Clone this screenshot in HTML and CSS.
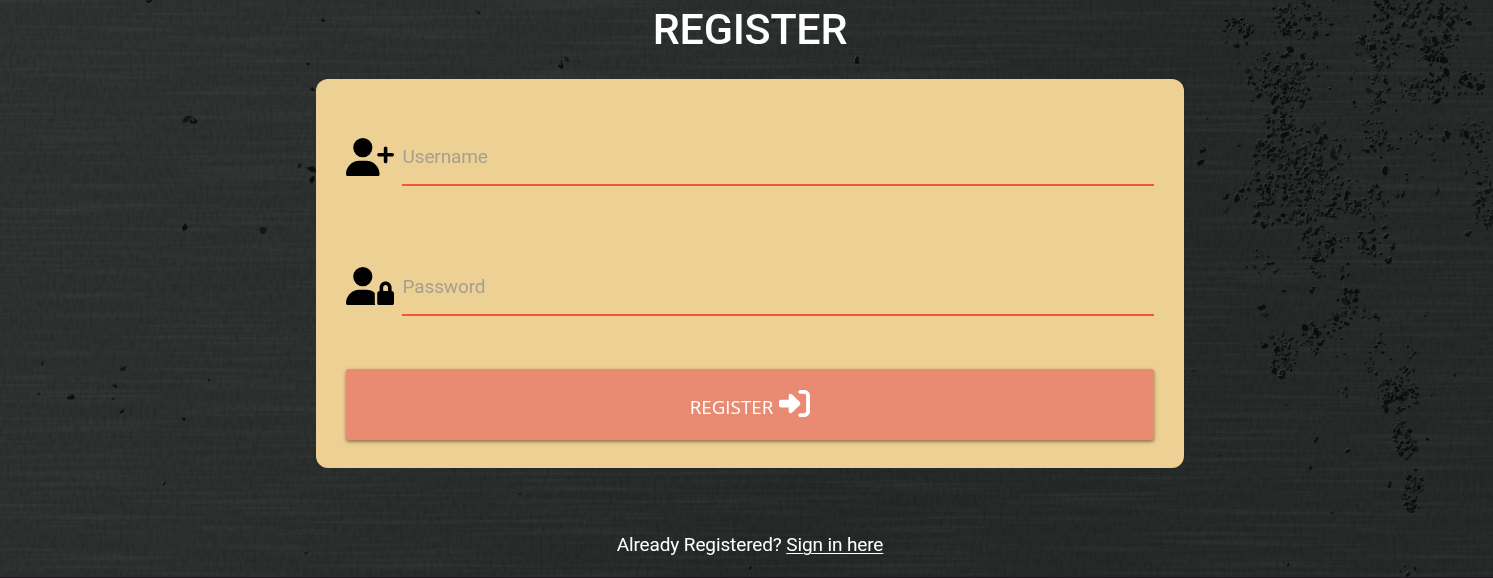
FILE: index.html
```html
<!DOCTYPE html>
<html lang="en">
<head>
<meta charset="utf-8">
<title>Register</title>
<link rel="stylesheet" href="styles.css">
</head>
<body>
<svg class="wall" viewBox="0 0 1493 578" preserveAspectRatio="none" aria-hidden="true">
  <defs>
    <linearGradient id="paint" x1="0" y1="0" x2="1" y2="0.35">
      <stop offset="0" stop-color="#2e3231"/>
      <stop offset="0.4" stop-color="#2b2f2e"/>
      <stop offset="0.75" stop-color="#252928"/>
      <stop offset="1" stop-color="#252928"/>
    </linearGradient>
    <filter id="strokes" x="0" y="0" width="100%" height="100%" color-interpolation-filters="sRGB">
      <feTurbulence type="fractalNoise" baseFrequency="0.006 0.25" numOctaves="3" seed="4"/>
      <feColorMatrix values="0 0 0 0 0.5  0 0 0 0 0.53  0 0 0 0 0.52  1.1 0 0 0 -0.48"/>
    </filter>
    <filter id="grain" x="0" y="0" width="100%" height="100%" color-interpolation-filters="sRGB">
      <feTurbulence type="fractalNoise" baseFrequency="0.3 0.12" numOctaves="3" seed="9"/>
      <feColorMatrix values="0 0 0 0 0  0 0 0 0 0.02  0 0 0 0 0.02  1.5 0 0 0 -0.62"/>
    </filter>
    <filter id="soft"><feGaussianBlur stdDeviation="0.6"/></filter>
  </defs>
  <rect width="1493" height="578" fill="url(#paint)"/>
  <rect width="1493" height="578" filter="url(#strokes)" opacity="0.2"/>
  <rect width="1493" height="578" filter="url(#grain)" opacity="0.2"/>
  <g id="chips" filter="url(#soft)"></g>
  <rect y="577" width="1493" height="1" fill="#24141b"/>
</svg>
<main class="page">
  <h1 class="title">REGISTER</h1>
  <form class="card">
    <div class="field">
      <svg class="field-icon" viewBox="0 0 640 512"><path d="M96 128a128 128 0 1 1 256 0A128 128 0 1 1 96 128zM0 482.3C0 383.8 79.8 304 178.3 304h91.4C368.2 304 448 383.8 448 482.3c0 16.4-13.3 29.7-29.7 29.7H29.7C13.3 512 0 498.7 0 482.3zM504 312V248H440c-13.3 0-24-10.7-24-24s10.7-24 24-24h64V136c0-13.3 10.7-24 24-24s24 10.7 24 24v64h64c13.3 0 24 10.7 24 24s-10.7 24-24 24H552v64c0 13.3-10.7 24-24 24s-24-10.7-24-24z"/></svg>
      <input class="input" type="text" placeholder="Username">
    </div>
    <div class="field">
      <svg class="field-icon field-icon-lock" viewBox="0 0 640 512"><path d="M224 256A128 128 0 1 0 224 0a128 128 0 1 0 0 256zm-45.7 48C79.8 304 0 383.8 0 482.3C0 498.7 13.3 512 29.7 512H392.6c-5.4-9.4-8.6-20.3-8.6-32V352c0-2.1 .1-4.2 .3-6.3c-31-26-71-41.7-114.6-41.7H178.3zM528 240c17.7 0 32 14.3 32 32v48H496V272c0-17.7 14.3-32 32-32zm-80 32v48c-17.7 0-32 14.3-32 32V480c0 17.7 14.3 32 32 32H608c17.7 0 32-14.3 32-32V352c0-17.7-14.3-32-32-32V272c0-44.2-35.8-80-80-80s-80 35.8-80 80z"/></svg>
      <input class="input" type="password" placeholder="Password">
    </div>
    <button class="submit" type="button">
      <span class="submit-label">REGISTER</span>
      <svg class="submit-icon" viewBox="0 0 512 512"><path d="M217.9 105.9L340.7 228.7c7.2 7.2 11.3 17.1 11.3 27.3s-4.1 20.1-11.3 27.3L217.9 406.1c-6.4 6.4-15 9.9-24 9.9c-18.7 0-33.9-15.2-33.9-33.9l0-62.1L32 320c-17.7 0-32-14.3-32-32l0-64c0-17.7 14.3-32 32-32l128 0 0-62.1c0-18.7 15.2-33.9 33.9-33.9c9 0 17.6 3.6 24 9.9zM352 416l64 0c17.7 0 32-14.3 32-32l0-256c0-17.7-14.3-32-32-32l-64 0c-17.7 0-32-14.3-32-32s14.3-32 32-32l64 0c53 0 96 43 96 96l0 256c0 53-43 96-96 96l-64 0c-17.7 0-32-14.3-32-32s14.3-32 32-32z"/></svg>
    </button>
  </form>
  <p class="signin">Already Registered? <a class="signin-link" href="#">Sign in here</a></p>
</main>
<script src="wall.js"></script>
</body>
</html>
```
FILE: styles.css
```css
* { box-sizing: border-box; }
body {
  margin: 0;
  height: 578px;
  overflow: hidden;
  background: #2a2e2d;
  font-family: Roboto, "Liberation Sans", sans-serif;
}
.wall {
  position: absolute;
  inset: 0;
  width: 100%;
  height: 100%;
}
.page {
  position: relative;
  display: flex;
  flex-direction: column;
  align-items: center;
  padding-left: 7px;
}
.title {
  margin: 0;
  padding-top: 4px;
  height: 79px;
  color: #fff;
  font-size: 43px;
  font-weight: 500;
  letter-spacing: -.25px;
  line-height: 51px;
}
.card {
  display: flex;
  flex-direction: column;
  width: 868px;
  height: 389px;
  padding: 48px 30px 28px;
  border-radius: 12px;
  background: #edd194;
}
.field {
  display: flex;
  align-items: flex-start;
  gap: 8px;
  height: 130px;
}
.field-icon {
  width: 48px;
  height: 38.4px;
  margin-top: 11px;
}
.field-icon-lock { margin-top: 10px; }
.input {
  flex: 1;
  height: 59px;
  padding: 1px 0 0 .5px;
  border: 0;
  border-bottom: 2px solid #f5533f;
  border-radius: 0;
  outline: 0;
  background: transparent;
  font: 400 19px Roboto, "Liberation Sans", sans-serif;
  letter-spacing: -.12px;
}
.input::placeholder { color: #a69f92; opacity: 1; }
.submit {
  display: flex;
  align-items: center;
  justify-content: center;
  gap: 6px;
  height: 71px;
  margin-top: -18px;
  flex: none;
  padding: 0;
  border: 0;
  border-radius: 3px;
  background: #e98a72;
  box-shadow: 0 2px 3px rgba(60, 45, 10, .4), 0 1px 5px rgba(60, 45, 10, .22);
  color: #fff;
}
.submit-label {
  margin-top: 5px;
  font: 400 18.8px/24px "Open Sans", "Noto Sans", sans-serif;
}
.submit-icon {
  width: 31px;
  height: 31px;
  margin-bottom: 3px;
  fill: #fff;
}
.signin {
  margin: 65px 0 0;
  color: #fff;
  font-size: 19px;
  letter-spacing: -.12px;
  line-height: 24px;
}
.signin-link {
  color: #fff;
  text-underline-offset: 2px;
  text-decoration-thickness: 1px;
}
```
FILE: wall.js
```js
// Flaked paint: [centre x, centre y, radius x, radius y, number of flakes]
const clusters = [
  [1237,30,16,16,20],[1296,20,24,22,50],[1283,75,34,25,95],[1288,97,18,12,25],[1278,122,15,18,28],
  [1300,155,46,27,115],[1268,190,26,18,45],[1312,198,25,32,70],[1280,218,26,8,22],[1316,244,18,16,24],
  [1263,262,17,12,14],[1318,272,8,8,9],[1335,185,16,10,12],[1340,240,9,12,10],[1342,270,8,10,6],[1346,210,22,9,16],
  [1380,48,28,18,50],[1392,12,30,15,36],[1440,20,28,22,60],[1440,52,16,15,30],[1378,85,12,25,24],
  [1413,90,15,11,20],[1438,86,15,16,22],[1470,85,15,14,18],[1376,142,18,15,22],[1413,155,24,25,15],
  [1475,132,18,14,20],[1478,165,14,14,14],[1484,202,12,26,38],[1370,200,28,18,24],[1376,245,18,20,24],[1375,112,12,12,10],[1435,133,18,9,12],
  [1348,300,9,14,22],[1340,320,12,9,16],[1370,316,11,7,12],[1318,333,16,9,20],[1282,345,20,10,26],
  [1285,363,13,16,22],[1306,348,14,8,14],[1375,345,10,13,10],[1372,368,9,8,9],[1398,395,19,18,65],
  [1405,440,11,19,38],[1413,490,10,20,34],[1408,571,8,5,7],[1345,391,7,6,5],[1412,352,7,7,6],[1402,372,12,5,8],
  [1360,90,90,90,28],[1300,140,90,130,35],[1380,400,90,110,15]
];
// Single pits: [x, y, size]
const pits = [
  [187,119,5],[194,121,4],[185,227,4],[263,230,5],[300,166,3],[311,169,5],[312,180,4],[312,89,3],[308,64,2],
  [323,20,3],[149,1,3],[123,368,4],[115,386,3],[71,397,4],[42,363,3],[39,394,2],[113,399,2],[122,411,3],
  [184,419,2],[209,380,2],[164,484,2],[306,553,2],[561,65,4],[567,59,3],[478,12,3],[857,60,4],[774,21,2],
  [520,494,2],[750,568,2],[1203,150,4],[1201,163,4],[1226,197,4],[1237,198,5],[1226,210,4],[1262,307,5],
  [1265,315,4],[1312,290,4],[1284,291,2],[1193,371,2],[1286,405,2],[1316,440,3],[1348,451,3],[1310,468,3],
  [1389,485,4],[1219,456,2],[1288,565,2],[1332,513,2],[1455,375,2],[1468,234,4],[1447,134,5],[1403,194,4],[1437,192,4],[1385,170,5]
];
let seed = 7219;
function rnd() {
  seed = (seed + 0x6D2B79F5) | 0;
  let t = Math.imul(seed ^ (seed >>> 15), 1 | seed);
  t = (t + Math.imul(t ^ (t >>> 7), 61 | t)) ^ t;
  return ((t ^ (t >>> 14)) >>> 0) / 4294967296;
}
function blob(x, y, r) {
  const turn = rnd() * 6.28, points = [];
  for (let i = 0; i < 7; i++) {
    const a = i / 7 * 6.28, d = r * (0.6 + rnd() * 0.7);
    const px = Math.cos(a) * d, py = Math.sin(a) * d * 0.65;
    points.push((x + px * Math.cos(turn) - py * Math.sin(turn)).toFixed(1) + "," +
                (y + px * Math.sin(turn) + py * Math.cos(turn)).toFixed(1));
  }
  return points.join(" ");
}
function flake(x, y, r) {
  const shape = blob(x, y, r);
  const edge = rnd() < 0.25 ? "#3a403f" : "#2d3231";
  return `<polygon points="${shape}" fill="${edge}" transform="translate(-.7 -.9)"/>` +
    `<polygon points="${shape}" fill="${rnd() < 0.6 ? "#0b0e0d" : "#151918"}"/>` +
    (r > 2.2 && rnd() < 0.55 ? `<polygon points="${blob(x - r * .3, y - r * .4, r * .6)}" fill="#252a29"/>` : "");
}
let out = "";
for (const [cx, cy, rx, ry, n] of clusters) {
  const dense = n > 15 && rx < 60;
  const count = dense ? n * 1.3 : n;
  for (let i = 0; i < count; i++) {
    const a = rnd() * 6.283, d = Math.pow(rnd(), 0.6) * 1.08;
    out += flake(cx + Math.cos(a) * rx * d, cy + Math.sin(a) * ry * d,
      dense ? 1.3 + rnd() * rnd() * 4.2 : 0.8 + rnd() * 2);
  }
}
for (const [x, y, r] of pits) out += flake(x, y, r);
document.getElementById("chips").innerHTML = out;
```
